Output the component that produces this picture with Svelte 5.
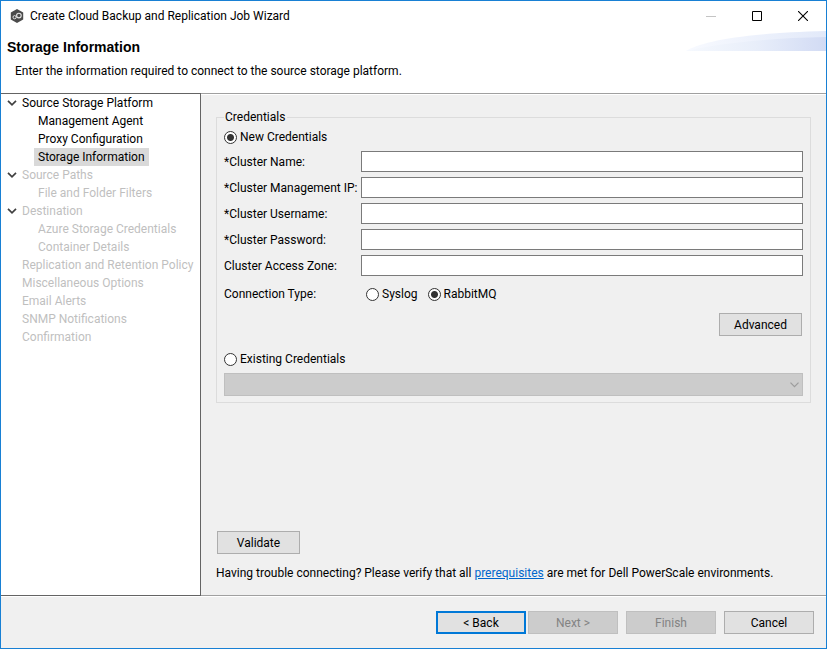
<script>
  const steps = [
    { label: 'Source Storage Platform', enabled: true, children: ['Management Agent', 'Proxy Configuration', 'Storage Information'] },
    { label: 'Source Paths', enabled: false, children: ['File and Folder Filters'] },
    { label: 'Destination', enabled: false, children: ['Azure Storage Credentials', 'Container Details'] },
    { label: 'Replication and Retention Policy', enabled: false, children: [] },
    { label: 'Miscellaneous Options', enabled: false, children: [] },
    { label: 'Email Alerts', enabled: false, children: [] },
    { label: 'SNMP Notifications', enabled: false, children: [] },
    { label: 'Confirmation', enabled: false, children: [] }
  ];
  const current = 'Storage Information';

  let fields = $state([
    { id: 'cluster-name', label: '*Cluster Name:', type: 'text', value: '' },
    { id: 'cluster-ip', label: '*Cluster Management IP:', type: 'text', value: '' },
    { id: 'cluster-user', label: '*Cluster Username:', type: 'text', value: '' },
    { id: 'cluster-password', label: '*Cluster Password:', type: 'password', value: '' },
    { id: 'cluster-zone', label: 'Cluster Access Zone:', type: 'text', value: '' }
  ]);
  let mode = $state('new');
  let connection = $state('rabbitmq');
</script>

<div class="window">
  <div class="titlebar">
    <svg class="logo" width="14" height="14" viewBox="0 0 14 14" aria-hidden="true">
      <path d="M7 0 13.2 3.5V10.5L7 14 .8 10.5V3.5Z" fill="#4b4b4b" />
      <circle cx="4.6" cy="8.2" r="1.6" fill="none" stroke="#e4e4e4" stroke-width="1" />
      <circle cx="8.9" cy="6.6" r="2.3" fill="none" stroke="#e4e4e4" stroke-width="1.1" />
    </svg>
    <span class="title">Create Cloud Backup and Replication Job Wizard</span>
    <div class="controls">
      <button class="control" aria-label="Minimize" disabled>
        <svg width="10" height="10" viewBox="0 0 10 10"><path d="M0 5.5H10" stroke="#c4c4c4" /></svg>
      </button>
      <button class="control" aria-label="Maximize">
        <svg width="10" height="10" viewBox="0 0 10 10"><path d="M.5 .5H9.5V9.5H.5Z" fill="none" stroke="#000" /></svg>
      </button>
      <button class="control" aria-label="Close">
        <svg width="10" height="10" viewBox="0 0 10 10"><path d="M0 0 10 10M10 0 0 10" stroke="#000" stroke-width="1.1" /></svg>
      </button>
    </div>
  </div>

  <header class="header">
    <svg class="swoosh" width="140" height="20" viewBox="0 0 140 20" aria-hidden="true">
      <defs>
        <linearGradient id="wave-back"><stop offset="0" stop-color="#f8faff" /><stop offset="1" stop-color="#e2e9f9" /></linearGradient>
        <linearGradient id="wave-front"><stop offset="0" stop-color="#f6f9fe" /><stop offset=".5" stop-color="#e8eefa" /><stop offset="1" stop-color="#d2dbf4" /></linearGradient>
      </defs>
      <path d="M0 20C14 11 56 2 140 0V20Z" fill="url(#wave-back)" />
      <path d="M0 20C30 13 80 7 140 6V20Z" fill="url(#wave-front)" />
    </svg>
    <h1>Storage Information</h1>
    <p>Enter the information required to connect to the source storage platform.</p>
  </header>

  <div class="body">
    <nav class="sidebar" aria-label="Wizard steps">
      <ul class="tree">
        {#each steps as step}
          <li class:off={!step.enabled}>
            <div class="node">
              <span class="arrow">
                {#if step.children.length}
                  <svg width="10" height="6" viewBox="0 0 10 6"><path d="M1 .8 5 4.8 9 .8" fill="none" stroke="#404040" stroke-width="1.7" /></svg>
                {/if}
              </span>
              <span>{step.label}</span>
            </div>
            {#if step.children.length}
              <ul class="branch">
                {#each step.children as child}
                  <li class="leaf"><span class:current={child === current}>{child}</span></li>
                {/each}
              </ul>
            {/if}
          </li>
        {/each}
      </ul>
    </nav>

    <main class="content">
      <fieldset>
        <legend>Credentials</legend>
        <label class="radio"><input type="radio" value="new" bind:group={mode} />New Credentials</label>
        <div class="grid">
          {#each fields as field}
            <label for={field.id}>{field.label}</label>
            <input class="text" id={field.id} type={field.type} bind:value={field.value} />
          {/each}
        </div>
        <div class="connection" role="radiogroup" aria-labelledby="connection-label">
          <span id="connection-label">Connection Type:</span>
          <div class="options">
            <label class="radio"><input type="radio" value="syslog" bind:group={connection} />Syslog</label>
            <label class="radio"><input type="radio" value="rabbitmq" bind:group={connection} />RabbitMQ</label>
          </div>
        </div>
        <div class="advanced"><button class="btn small">Advanced</button></div>
        <label class="radio"><input type="radio" value="existing" bind:group={mode} />Existing Credentials</label>
        <div class="combo">
          <select aria-label="Existing Credentials" disabled={mode !== 'existing'}><option></option></select>
          <svg width="9" height="6" viewBox="0 0 9 6" aria-hidden="true"><path d="M.5 .7 4.5 4.7 8.5 .7" fill="none" stroke="#9c9c9c" stroke-width="1.2" /></svg>
        </div>
      </fieldset>

      <div class="bottom">
        <button class="btn small">Validate</button>
        <p>Having trouble connecting? Please verify that all <a href="#prerequisites">prerequisites</a> are met for Dell PowerScale environments.</p>
      </div>
    </main>
  </div>

  <footer class="footer">
    <div class="pair">
      <button class="btn primary">&lt; Back</button>
      <button class="btn" disabled>Next &gt;</button>
    </div>
    <button class="btn" disabled>Finish</button>
    <button class="btn">Cancel</button>
  </footer>
</div>

<style>
  :global(body) { margin: 0; }
  * { box-sizing: border-box; }
  .window {
    display: flex;
    flex-direction: column;
    min-height: 100vh;
    border: 1px solid #1880d4;
    background: #f0f0f0;
    color: #000;
    font: 12px/18px Roboto, "Noto Sans", sans-serif;
  }
  button, input, select { font: inherit; color: inherit; }
  p, h1, ul { margin: 0; padding: 0; }
  ul { list-style: none; }

  .titlebar {
    display: flex;
    align-items: center;
    height: 29px;
    padding-left: 9px;
    background: #fff;
  }
  .title { margin-left: 6px; white-space: nowrap; }
  .controls { display: flex; margin-left: auto; }
  .control {
    display: flex;
    align-items: center;
    justify-content: center;
    width: 46px;
    height: 28px;
    padding: 0;
    border: 0;
    background: none;
  }

  .header {
    position: relative;
    height: 64px;
    padding: 8px 6px;
    border-bottom: 1px solid #a0a0a0;
    background: #fff;
  }
  .header h1 { font: bold 14px/18px "Liberation Sans", Arial, sans-serif; }
  .header p { margin-top: 6px; padding-left: 8px; }
  .swoosh { position: absolute; top: 1px; right: 0; }

  .body { display: flex; flex: 1; }
  .sidebar {
    width: 200px;
    flex: none;
    margin-top: -1px;
    z-index: 1;
    border: 1px solid #646464;
    border-left: 0;
    background: #fff;
  }
  .node { display: flex; height: 18px; white-space: nowrap; }
  .arrow {
    display: flex;
    align-items: center;
    justify-content: center;
    width: 21px;
    flex: none;
  }
  .branch { padding-left: 33px; }
  .leaf { height: 18px; white-space: nowrap; }
  .leaf span { display: inline-block; padding: 0 4px; }
  .leaf .current { background: #d9d9d9; }
  .off { color: #bfbfbf; }

  .content {
    display: flex;
    flex: 1;
    flex-direction: column;
    justify-content: space-between;
    min-width: 0;
    padding: 13px 15px 13px;
    border-top: 1px solid #fff;
    border-bottom: 1px solid #a0a0a0;
  }
  fieldset {
    min-width: 0;
    margin: 0;
    padding: 2px 7px 6px;
    border: 1px solid #dcdcdc;
  }
  legend { padding: 0 2px 0 1px; }
  .radio { display: flex; align-items: center; gap: 3px; height: 18px; }
  .radio input {
    width: 13px;
    height: 13px;
    flex: none;
    margin: 0;
    appearance: none;
    border: 1px solid #333;
    border-radius: 50%;
    background: #fff;
  }
  .radio input:checked { background: radial-gradient(circle, #333 3px, #fff 4px); }
  .grid {
    display: grid;
    grid-template-columns: 137px 1fr;
    row-gap: 5px;
    align-items: center;
    margin-top: 5px;
  }
  .grid label { white-space: nowrap; }
  .text {
    width: 100%;
    min-width: 0;
    height: 21px;
    padding: 0 4px;
    border: 1px solid #7a7a7a;
    background: #fff;
  }
  .connection {
    display: grid;
    grid-template-columns: 142px 1fr;
    margin-top: 9px;
  }
  .options { display: flex; gap: 10px; }
  .advanced {
    display: flex;
    justify-content: flex-end;
    margin: 10px 1px 14px;
  }
  .combo { position: relative; margin-top: 5px; }
  .combo select {
    display: block;
    width: 100%;
    height: 23px;
    appearance: none;
    border: 1px solid #bfbfbf;
    border-radius: 0;
    background: #ccc;
    opacity: 1;
  }
  .combo svg { position: absolute; top: 9px; right: 4px; }

  .btn {
    width: 90px;
    height: 23px;
    padding: 0;
    border: 1px solid #adadad;
    background: #e1e1e1;
  }
  .btn.small { width: 83px; }
  .btn.primary { border: 2px solid #0078d7; }
  .btn:disabled { border-color: #bfbfbf; background: #ccc; color: #838383; }

  .bottom .btn { display: block; margin: 0 0 10px 1px; }
  a { color: #0066cc; }

  .footer {
    display: flex;
    justify-content: flex-end;
    gap: 8px;
    padding: 14px 12px;
    border-top: 1px solid #fff;
  }
  .pair { display: flex; gap: 2px; }
</style>
